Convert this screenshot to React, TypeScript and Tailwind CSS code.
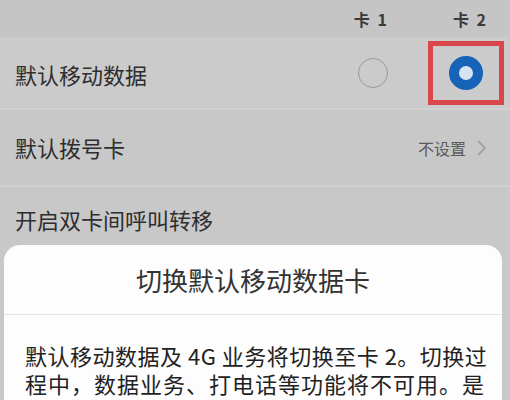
import React from "react";

const font = { fontFamily: '"Noto Sans CJK SC", "Noto Sans", sans-serif' };

export default function App() {
  return (
    <div
      className="w-[510px] h-[400px] overflow-hidden bg-[#c8c8c8] flex flex-col"
      style={font}
    >
      {/* header */}
      <div className="shrink-0 h-[37px] bg-[#c5c5c5] flex items-center justify-end pr-[22px] gap-[64px] text-[16px] font-bold text-[#3a3a3a]">
        <span className="tracking-[2px]">卡 1</span>
        <span className="tracking-[2px]">卡 2</span>
      </div>
      {/* row 1 */}
      <div className="shrink-0 h-[73px] bg-[#cbcbcb] flex items-center pl-[15px] pr-[6px] border-b-2 border-[#d2d2d2]">
        <span className="flex-1 text-[22px] text-[#2e2e2e] pt-[4px]">默认移动数据</span>
        <div className="w-[30px] h-[30px] rounded-full border border-[#9a9a9a]" />
        <div className="ml-[40px] w-[76px] h-[64px] border-[5px] border-[#d9474d] flex items-center justify-center">
          <div className="w-[34px] h-[34px] rounded-full border-[10px] border-[#1763b8] bg-[#d6e4f2]" />
        </div>
      </div>
      {/* row 2 */}
      <div className="shrink-0 h-[77px] flex items-center pl-[15px] pr-[22px] border-b-2 border-[#d1d1d1]">
        <span className="flex-1 text-[22px] text-[#2e2e2e]">默认拨号卡</span>
        <span className="text-[16px] text-[#5a5a5a]">不设置</span>
        <svg width="12" height="18" viewBox="0 0 12 18" className="ml-[10px]">
          <path d="M2 2 L9 9 L2 16" fill="none" stroke="#9a9a9a" strokeWidth="1.6" />
        </svg>
      </div>
      {/* row 3 */}
      <div className="shrink-0 h-[58px] flex items-center pl-[15px] pt-[6px]">
        <span className="text-[22px] text-[#2e2e2e]">开启双卡间呼叫转移</span>
      </div>
      {/* dialog */}
      <div className="shrink-0 ml-[4px] mr-[8px] h-[200px] bg-[#fdfdfd] rounded-t-[16px] flex flex-col">
        <div className="shrink-0 h-[69px] flex items-center justify-center text-[26px] text-[#333]">
          切换默认移动数据卡
        </div>
        <div className="shrink-0 h-px bg-[#e2e2e2]" />
        <div className="pl-[21px] pr-[8px] pt-[26px] text-[22px] leading-[28px] text-[#222]">
          <div className="whitespace-nowrap tracking-[0.5px]">默认移动数据及 4G 业务将切换至卡 2。切换过</div>
          <div className="whitespace-nowrap tracking-[1px]">程中，数据业务、打电话等功能将不可用。是</div>
        </div>
      </div>
    </div>
  );
}
